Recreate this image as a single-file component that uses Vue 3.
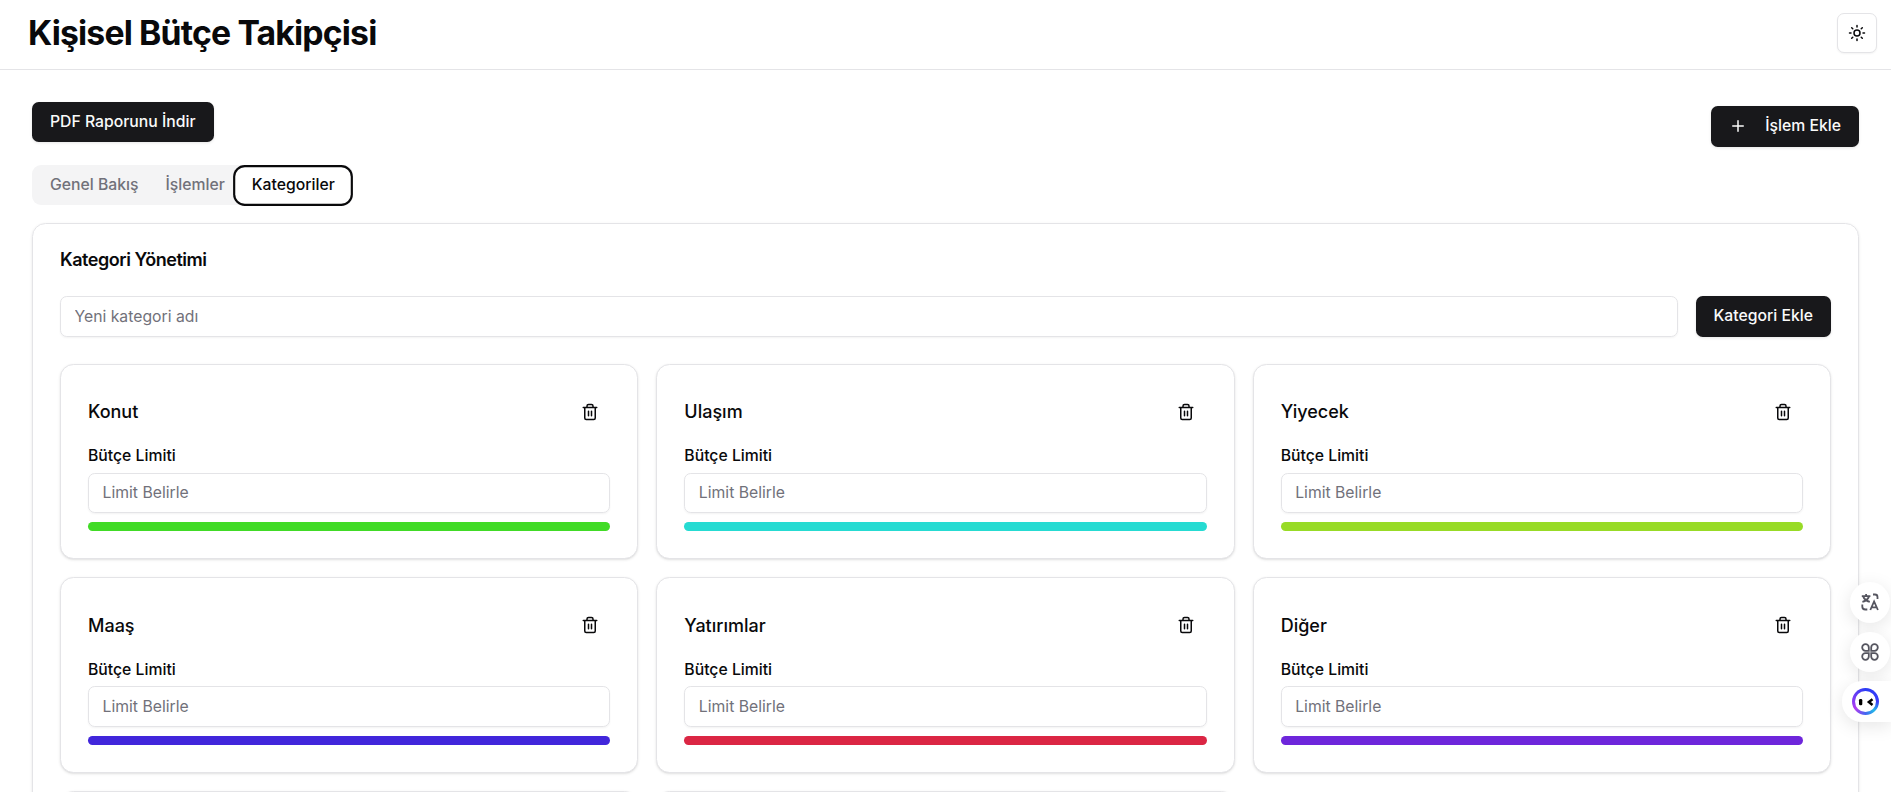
<script setup>
const categories = [
  { name: 'Konut', color: '#41db26' },
  { name: 'Ulaşım', color: '#26dbd2' },
  { name: 'Yiyecek', color: '#98db26' },
  { name: 'Maaş', color: '#4126db' },
  { name: 'Yatırımlar', color: '#db2644' },
  { name: 'Diğer', color: '#6e26db' },
]
</script>

<template>
  <div class="page">
    <header class="topbar">
      <h1>Kişisel Bütçe Takipçisi</h1>
      <button class="theme" aria-label="Tema">
        <svg viewBox="0 0 24 24" class="icon">
          <circle cx="12" cy="12" r="4" />
          <path d="M12 2v2M12 20v2M4.93 4.93l1.41 1.41M17.66 17.66l1.41 1.41M2 12h2M20 12h2M6.34 17.66l-1.41 1.41M19.07 4.93l-1.41 1.41" />
        </svg>
      </button>
    </header>

    <main>
      <div class="actions">
        <button class="btn pdf">PDF Raporunu İndir</button>
        <button class="btn add">
          <svg viewBox="0 0 24 24" class="icon"><path d="M5 12h14M12 5v14" /></svg>
          İşlem Ekle
        </button>
      </div>

      <nav class="tabs">
        <button class="tab">Genel Bakış</button>
        <button class="tab">İşlemler</button>
        <button class="tab active">Kategoriler</button>
      </nav>

      <section class="panel">
        <h2>Kategori Yönetimi</h2>
        <div class="new-row">
          <input class="field" placeholder="Yeni kategori adı" />
          <button class="btn">Kategori Ekle</button>
        </div>
        <div class="grid">
          <article v-for="c in categories" :key="c.name" class="card">
            <div class="card-head">
              <span class="name">{{ c.name }}</span>
              <button class="trash" aria-label="Sil">
                <svg viewBox="0 0 24 24" class="icon">
                  <path d="M3 6h18M19 6v14c0 1-1 2-2 2H7c-1 0-2-1-2-2V6M8 6V4c0-1 1-2 2-2h4c1 0 2 1 2 2v2M10 11v6M14 11v6" />
                </svg>
              </button>
            </div>
            <label>Bütçe Limiti</label>
            <input class="field" placeholder="Limit Belirle" />
            <div class="bar" :style="{ backgroundColor: c.color }"></div>
          </article>
          <article v-for="n in 2" :key="n" class="card"></article>
        </div>
      </section>
    </main>

    <aside class="dock">
      <div class="round">
        <svg viewBox="0 0 18 18" class="tool">
          <path d="M0.800 3.200h8.600M5.100 1v2.200M2.300 3.600c.8 2.400 3 4.300 6.500 5.200M7.900 3.600c-.8 2.400-3 4.300-6.500 5.200M12 1.500h2q2.500 0 2.500 2.500v2M1.300 11.500v2q0 3 3 3h2M9.300 17l3.800-8.500 3.800 8.500M10.700 14.300h4.800" />
        </svg>
      </div>
      <div class="round">
        <svg viewBox="0 0 18 18" class="tool">
          <path d="M7.800 7.800H4.500A3.300 3.300 0 1 1 7.800 4.500zM10.200 7.800V4.500a3.300 3.300 0 1 1 3.300 3.300zM7.800 10.200v3.300a3.300 3.300 0 1 1-3.300-3.300zM10.200 10.200h3.300a3.300 3.300 0 1 1-3.300 3.300z" />
        </svg>
      </div>
      <div class="pill">
        <div class="bot">
          <svg viewBox="3 3 21 21">
            <rect x="7" y="11" width="3.300" height="6.200" rx="1.300" />
            <path class="wink" d="M20.500 11.300l-3.600 2.800 3.600 2.800" />
          </svg>
        </div>
      </div>
    </aside>
  </div>
</template>

<style>
html {
  font-size: 18px;
}
body {
  background: #fff;
  overflow: hidden;
}
</style>

<style scoped>
.page {
  height: 100vh;
  overflow: hidden;
  color: #09090b;
  font-family: Inter, sans-serif;
  line-height: 1.5;
}
.page * {
  box-sizing: border-box;
}
button,
input {
  font: inherit;
  margin: 0;
}
button {
  border: 0;
  padding: 0;
  background: none;
  color: inherit;
}
.icon {
  width: 18px;
  height: 18px;
  flex: none;
  fill: none;
  stroke: currentColor;
  stroke-width: 2;
  stroke-linecap: round;
  stroke-linejoin: round;
}
.topbar {
  display: flex;
  align-items: flex-start;
  justify-content: space-between;
  height: 70px;
  padding: 13px 14px 0 28px;
  border-bottom: 1px solid #e4e4e7;
}
h1 {
  margin: 0;
  font-size: 33.75px;
  line-height: 40px;
  font-weight: 700;
  letter-spacing: -0.025em;
}
.theme {
  display: grid;
  place-items: center;
  width: 40px;
  height: 40px;
  border: 1px solid #e4e4e7;
  border-radius: 7px;
  background: #fff;
  box-shadow: 0 1px 2px rgba(0, 0, 0, 0.05);
}
main {
  padding: 32px;
}
.actions {
  display: flex;
  align-items: flex-start;
  justify-content: space-between;
  height: 63px;
}
.btn {
  display: flex;
  align-items: center;
  justify-content: center;
  height: 40.5px;
  padding: 0 18px;
  border-radius: 6.75px;
  background: #18181b;
  color: #fafafa;
  font-size: 15.75px;
  font-weight: 500;
  line-height: 22.5px;
  white-space: nowrap;
  box-shadow: 0 1px 3px rgba(0, 0, 0, 0.1);
}
.pdf {
  height: 40px;
}
.add {
  gap: 18px;
  margin-top: 4px;
}
.tabs {
  display: flex;
  width: fit-content;
  height: 40px;
  padding: 4.5px;
  border-radius: 9px;
  background: #f4f4f5;
}
.tab {
  padding: 0 13.5px;
  border-radius: 6.75px;
  color: #71717a;
  font-size: 15.75px;
  font-weight: 500;
  line-height: 22.5px;
}
.tab.active {
  color: #09090b;
  background: #fff;
  box-shadow: 0 0 0 2.75px #fff, 0 0 0 4.9px #09090b;
}
.panel {
  height: 700px;
  margin-top: 18px;
  padding: 27px;
  border: 1px solid #e4e4e7;
  border-radius: 13.5px;
  box-shadow: 0 1px 3px rgba(0, 0, 0, 0.1);
}
h2 {
  margin: 0 0 27px;
  font-size: 18px;
  line-height: 18px;
  font-weight: 600;
  letter-spacing: -0.025em;
}
.new-row {
  display: flex;
  gap: 18px;
  margin-bottom: 27px;
}
.field {
  display: block;
  width: 100%;
  min-width: 0;
  height: 40.5px;
  padding: 0 13.5px;
  border: 1px solid #e4e4e7;
  border-radius: 6.75px;
  background: transparent;
  font-size: 15.75px;
  box-shadow: 0 1px 2px rgba(0, 0, 0, 0.05);
}
.field::placeholder {
  color: #71717a;
  opacity: 1;
}
.grid {
  display: grid;
  grid-template-columns: repeat(3, 1fr);
  gap: 18px;
}
.card {
  height: 195.5px;
  padding: 27px;
  border: 1px solid #e4e4e7;
  border-radius: 13.5px;
  background: #fff;
  box-shadow: 0 1px 3px rgba(0, 0, 0, 0.1), 0 1px 2px -1px rgba(0, 0, 0, 0.1);
}
.card-head {
  display: flex;
  align-items: center;
  justify-content: space-between;
  height: 40.5px;
}
.name {
  font-size: 18px;
  font-weight: 500;
}
.trash {
  display: grid;
  place-items: center;
  width: 40.5px;
  height: 40.5px;
}
label {
  display: block;
  height: 40.5px;
  padding-top: 13px;
  font-size: 15.75px;
  font-weight: 500;
  line-height: 22.5px;
}
.bar {
  height: 9px;
  margin-top: 9px;
  border-radius: 9px;
}
.dock {
  position: fixed;
  right: 0;
  top: 582px;
  display: flex;
  flex-direction: column;
  align-items: flex-end;
  gap: 9px;
}
.round,
.pill {
  display: grid;
  place-items: center;
  width: 40px;
  height: 40.5px;
  border-radius: 50%;
  background: #fff;
  box-shadow: 0 4px 18px rgba(0, 0, 0, 0.1);
}
.round {
  margin-right: 1px;
}
.pill {
  width: 49px;
  padding-right: 3px;
  border-radius: 20px 0 0 20px;
}
.tool {
  width: 18px;
  height: 18px;
  fill: none;
  stroke: #55555f;
  stroke-width: 1.8;
}
.bot {
  width: 27px;
  height: 27px;
  padding: 3px;
  border-radius: 50%;
  background: conic-gradient(#2b3df5, #3a3cf8 25%, #22b8e8 38%, #4466f0 50%, #b13cf0 65%, #7a3cf5 80%, #2b3df5);
}
.bot svg {
  display: block;
  width: 21px;
  height: 21px;
  border-radius: 50%;
  background: #fff;
}
.wink {
  fill: none;
  stroke: #000;
  stroke-width: 2.5;
}
</style>
